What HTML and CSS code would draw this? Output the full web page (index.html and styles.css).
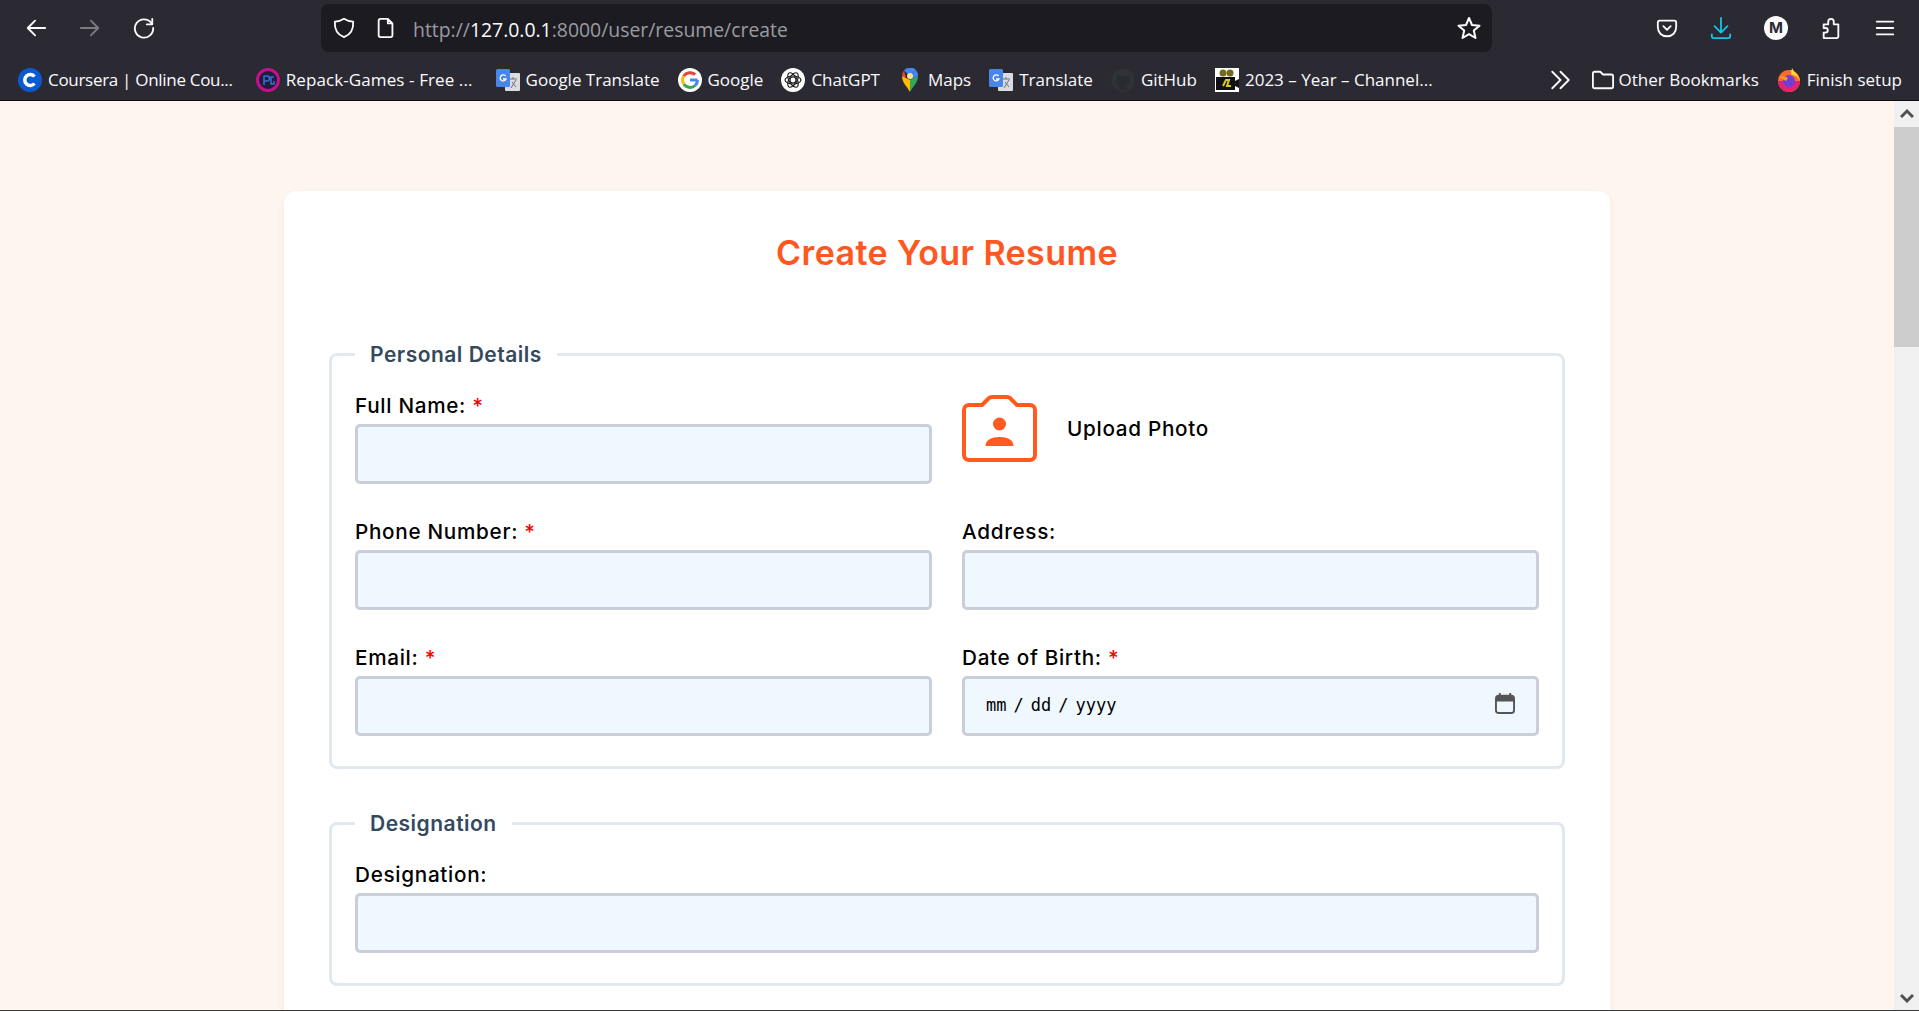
FILE: index.html

```html
<!DOCTYPE html>
<html>
<head>
<meta charset="utf-8"/>
<title>Create Your Resume</title>
<link rel="stylesheet" href="styles.css">
</head>
<body>
<div class="browser">

<div class="toolbar">
  <div class="nav-btns">
    <svg class="ico" viewBox="0 0 24 24"><path d="M22 12H3M11 4l-8 8 8 8"/></svg>
    <svg class="ico ico-off" viewBox="0 0 24 24"><path d="M2 12h19M13 4l8 8-8 8"/></svg>
    <svg class="ico" viewBox="0 0 24 24"><path d="M20 6.500A10 10 0 1 0 22 12M21 2v6h-6"/></svg>
  </div>
  <div class="url-bar">
    <svg class="ico" viewBox="0 0 24 24"><path d="M12 2c3 2 6 3 10 3 .5 8-2 14-10 17C4 19 1.500 13 2 5c4 0 7-1 10-3z"/></svg>
    <svg class="ico ico-page" viewBox="0 0 18 24"><path d="M3 2h8l5 5v13a2 2 0 0 1-2 2H3a2 2 0 0 1-2-2V4a2 2 0 0 1 2-2zM11 2v5h5"/></svg>
    <div class="url-text">http://<span class="url-host">127.0.0.1</span>:8000/user/resume/create</div>
    <svg class="ico ico-star" viewBox="0 0 24 24"><path d="M12 2l3 7 7.500.7-5.700 4.900 1.700 7.400-6.500-3.900L5.500 22l1.700-7.400L1.500 9.700 9 9z"/></svg>
  </div>
  <div class="tool-btns">
    <svg class="ico" viewBox="0 0 24 24"><path d="M4 4h16a2 2 0 0 1 2 2v5c0 6-4 10-10 10S2 17 2 11V6a2 2 0 0 1 2-2zM8 10l4 4 4-4"/></svg>
    <svg class="ico ico-cyan" viewBox="0 0 24 24"><path d="M12 1v16M5 10l7 7 7-7M2 19v2a2 2 0 0 0 2 2h16a2 2 0 0 0 2-2v-2"/></svg>
    <div class="avatar">M</div>
    <svg class="ico" viewBox="0 0 24 24"><path d="M4 8h5V5a3 3 0 0 1 6 0v3h5v13a2 2 0 0 1-2 2H4v-6h2a2.500 2.500 0 0 0 0-5H4z"/></svg>
    <svg class="ico" viewBox="0 0 24 24"><path d="M3 5h18M3 12h18M3 19h18"/></svg>
  </div>
</div>

<div class="bookmarks">
  <div class="bm bm-cut bm-tight">
    <svg class="bm-ico" viewBox="0 0 24 24"><circle cx="12" cy="12" r="12" fill="#0a5bd3"/><path d="M16.500 8.500a5.500 5.500 0 1 0 0 7" fill="none" stroke="#fff" stroke-width="3.500"/></svg>
    <span>Coursera | Online Cou...</span>
  </div>
  <div class="bm bm-cut bm-wide">
    <svg class="bm-ico" viewBox="0 0 24 24"><circle cx="12" cy="12" r="10.500" fill="#1b1d3a" stroke="#c4108c" stroke-width="3"/><path d="M8 17V8h3a2 2 0 0 1 0 5H8M18 9h-3v7h3v-3" fill="none" stroke="#3b6fd0" stroke-width="1.500"/></svg>
    <span>Repack-Games - Free ...</span>
  </div>
  <div class="bm">
    <svg class="bm-ico" viewBox="0 0 24 24"><rect x="9" y="5" width="15" height="18" rx="1" fill="#d9dce1"/><path d="M14 11h7M17 9v2M15 20l5-8M16 14l4 5" stroke="#6c7079" fill="none"/><rect x="0" y="1" width="14" height="18" rx="1.500" fill="#4a86e8"/><path d="M9.500 8a3 3 0 1 0 .5 3H7" fill="none" stroke="#fff" stroke-width="1.300"/></svg>
    <span>Google Translate</span>
  </div>
  <div class="bm">
    <svg class="bm-ico" viewBox="0 0 24 24"><circle cx="12" cy="12" r="12" fill="#fff"/><path d="M19.500 12H12" fill="none" stroke="#4285f4" stroke-width="3"/><path d="M19.500 12a7.500 7.500 0 0 1-2.400 5.500" fill="none" stroke="#4285f4" stroke-width="3"/><path d="M17.100 17.500A7.500 7.500 0 0 1 5.800 16" fill="none" stroke="#34a853" stroke-width="3"/><path d="M5.800 16a7.500 7.500 0 0 1 0-8" fill="none" stroke="#fbbc05" stroke-width="3"/><path d="M5.800 8a7.500 7.500 0 0 1 11.400-1.300" fill="none" stroke="#ea4335" stroke-width="3"/></svg>
    <span>Google</span>
  </div>
  <div class="bm">
    <svg class="bm-ico" viewBox="0 0 24 24"><circle cx="12" cy="12" r="12" fill="#fff"/><g fill="none" stroke="#222" stroke-width="1.200"><circle cx="12" cy="12" r="3"/><ellipse cx="12" cy="12" rx="8" ry="4"/><ellipse cx="12" cy="12" rx="8" ry="4" transform="rotate(60 12 12)"/><ellipse cx="12" cy="12" rx="8" ry="4" transform="rotate(120 12 12)"/></g></svg>
    <span>ChatGPT</span>
  </div>
  <div class="bm">
    <svg class="bm-ico" viewBox="0 0 24 24"><path d="M12 24C9 18 4 15 4 8l8 4z" fill="#fbbc05"/><path d="M12 24c3-6 8-9 8-16l-8 4z" fill="#34a853"/><path d="M6 2.500A8 8 0 0 0 4 8l4 2z" fill="#ea4335"/><path d="M6 2.500A8 8 0 0 1 18 2l-6 6z" fill="#4285f4"/><path d="M18 2a8 8 0 0 1 2 6l-8 4-2-2z" fill="#4285f4"/><circle cx="12" cy="8" r="3" fill="#fbe08a"/></svg>
    <span>Maps</span>
  </div>
  <div class="bm">
    <svg class="bm-ico" viewBox="0 0 24 24"><rect x="9" y="5" width="15" height="18" rx="1" fill="#d9dce1"/><path d="M14 11h7M17 9v2M15 20l5-8M16 14l4 5" stroke="#6c7079" fill="none"/><rect x="0" y="1" width="14" height="18" rx="1.500" fill="#4a86e8"/><path d="M9.500 8a3 3 0 1 0 .5 3H7" fill="none" stroke="#fff" stroke-width="1.300"/></svg>
    <span>Translate</span>
  </div>
  <div class="bm">
    <svg class="bm-ico" viewBox="0 0 24 24"><circle cx="12" cy="12" r="11.500" fill="#2f3338"/><path d="M8 22v-5c-3-1-3-4-2-6 0-2 0-3 1-4 1 0 2 1 3 1.500h4C15 8 16 7 17 7c1 1 1 2 1 4 1 2 1 5-2 6v5z" fill="#2b2a33"/></svg>
    <span>GitHub</span>
  </div>
  <div class="bm">
    <svg class="bm-ico" viewBox="0 0 24 24"><rect width="24" height="24" fill="#fff"/><rect x="1" y="9" width="19" height="13" fill="#111"/><circle cx="8" cy="5" r="3.500" fill="#6f6a1c"/><circle cx="15" cy="5" r="3.500" fill="#6f6a1c"/><path d="M8 18l3-6h3l-2 6h4" fill="none" stroke="#d8c82a" stroke-width="2"/><path d="M20 13l4-2v9l-4-2z" fill="#111"/></svg>
    <span>2023 – Year – Channel...</span>
  </div>
  <div class="bm-right">
    <svg class="ico ico-chev" viewBox="0 0 20 24"><path d="M1 3l9 9-9 9M10 3l9 9-9 9"/></svg>
    <div class="bm bm-folder">
      <svg class="ico" viewBox="0 0 24 20"><path d="M3 1h6l3 3h9a2 2 0 0 1 2 2v11a2 2 0 0 1-2 2H3a2 2 0 0 1-2-2V3a2 2 0 0 1 2-2z"/></svg>
      <span>Other Bookmarks</span>
    </div>
    <div class="bm">
      <svg class="bm-ico" viewBox="0 0 24 24"><circle cx="12" cy="13" r="11" fill="#ff6a2b"/><path d="M1 13a11 11 0 0 0 22 0z" fill="#e3236f"/><path d="M13 2c4 1 9 4 10 11-2-4-5-6-8-6z" fill="#ffc21f"/><path d="M15 0c1 3 4 5 6 9l-7-3z" fill="#ffd93b"/><circle cx="12" cy="13" r="6" fill="#6d3fd8"/><path d="M2 9c3-1 6-1 9 1l-2 3z" fill="#ff9a1f"/></svg>
      <span>Finish setup</span>
    </div>
  </div>
</div>

<div class="viewport">
  <div class="page">
    <div class="card">
      <h1 class="title">Create Your Resume</h1>

      <fieldset class="section">
        <legend>Personal Details</legend>
        <div class="form-grid">
          <div class="field">
            <label>Full Name: <span class="req">*</span></label>
            <input type="text"/>
          </div>
          <div class="upload">
            <svg class="upload-ico" viewBox="0 0 75 67"><path class="cam" d="M7 10H20L27 3Q28 2 30 2H45Q47 2 48 3L55 10H68a5 5 0 0 1 5 5V60a5 5 0 0 1-5 5H7a5 5 0 0 1-5-5V15a5 5 0 0 1 5-5z"/><circle class="person" cx="37.500" cy="29" r="6.500"/><path class="person" d="M23.500 51c0-6 6-9 14-9s14 3 14 9z"/></svg>
            <span class="upload-text">Upload Photo</span>
          </div>
          <div class="field">
            <label>Phone Number: <span class="req">*</span></label>
            <input type="text"/>
          </div>
          <div class="field">
            <label>Address:</label>
            <input type="text"/>
          </div>
          <div class="field">
            <label>Email: <span class="req">*</span></label>
            <input type="text"/>
          </div>
          <div class="field">
            <label>Date of Birth: <span class="req">*</span></label>
            <input class="date" type="date"/>
          </div>
        </div>
      </fieldset>

      <fieldset class="section">
        <legend>Designation</legend>
        <div class="field">
          <label>Designation:</label>
          <input type="text"/>
        </div>
      </fieldset>
    </div>
  </div>
  <div class="scrollbar">
    <svg class="sb-arrow" viewBox="0 0 14 10"><path d="M1 8l6-6 6 6"/></svg>
    <div class="sb-thumb"></div>
    <svg class="sb-arrow sb-down" viewBox="0 0 14 10"><path d="M1 2l6 6 6-6"/></svg>
  </div>
</div>
<div class="edge"></div>

</div>
</body>
</html>
```

FILE: styles.css

```css
html, body { height: 100%; margin: 0; }
body { font-family: Inter, "Liberation Sans", sans-serif; overflow: hidden; }
.browser { height: 1011px; display: flex; flex-direction: column; overflow: hidden; }

/* browser chrome */
.toolbar {
  height: 56px; background: #2b2a33; display: flex; align-items: center;
  padding: 0 23px 0 25px;
}
.ico {
  width: 22px; height: 22px; flex: none; fill: none; stroke: #fbfbfe;
  stroke-width: 2; stroke-linecap: round; stroke-linejoin: round;
}
.ico-off { stroke: #7c7b82; }
.ico-cyan { stroke: #12c4e8; }
.nav-btns { display: flex; gap: 32px; width: 296px; }
.url-bar {
  width: 1171px; height: 48px; background: #1c1b22; border-radius: 8px;
  display: flex; align-items: center; padding: 0 11px 0 12px; box-sizing: border-box;
}
.ico-page { width: 18px; margin-left: 22px; }
.ico-star { margin-left: auto; width: 24px; height: 24px; }
.url-text {
  margin: 2px 0 0 18px; font-family: "Open Sans", sans-serif; font-size: 19.400px; color: #9b9ba0;
  white-space: nowrap;
}
.url-host { color: #fbfbfe; }
.tool-btns { margin-left: auto; display: flex; align-items: center; gap: 32px; }
.avatar {
  width: 24px; height: 24px; border-radius: 50%; background: #fbfbfe; color: #2b2a33;
  font-size: 15px; font-weight: 700; text-align: center; line-height: 24px;
}
.bookmarks {
  height: 44px; background: #2b2a33; border-bottom: 1px solid #0c0c0d;
  display: flex; align-items: center; padding: 0 17px 0 18px;
  font-family: "Open Sans", sans-serif; font-size: 17px; color: #fbfbfe; gap: 18px;
}
.bm { display: flex; align-items: center; gap: 6px; white-space: nowrap; margin-top: 3px; }
.bm-cut { margin-right: 5px; }
.bm-tight { letter-spacing: -0.3px; }
.bm-wide { letter-spacing: 0.1px; }
.bm-ico { width: 24px; height: 24px; flex: none; }
.bm-right { margin-left: auto; display: flex; align-items: center; gap: 18px; }
.ico-chev { width: 19px; margin: 3px 4px 0 0; }
.bm-folder { gap: 5px; }

/* page */
.viewport { flex: 1; min-height: 0; display: flex; }
.page { flex: 1; min-width: 0; overflow: hidden; background: #fff5ef; padding-top: 90px; }
.card {
  width: 1326px; box-sizing: border-box; margin: 0 auto; background: #fff; border-radius: 12px;
  padding: 36px 45px 40px; box-shadow: 0 4px 10px rgba(0, 0, 0, 0.05);
}
.title {
  margin: 0 0 60px; text-align: center; font-size: 34px; line-height: 52px;
  font-weight: 600; color: #ff5722; letter-spacing: 0.4px;
}
.section {
  margin: 0 0 39px; padding: 22px 23px 30px; border: 3px solid #e2e8f0; border-radius: 8px;
  min-width: 0;
}
.section legend {
  padding: 2px 15px 0; font-size: 21px; line-height: 28px;
  font-weight: 600; color: #34495e; letter-spacing: 0.5px;
}
.form-grid { display: grid; grid-template-columns: 1fr 1fr; column-gap: 30px; row-gap: 33px; }
.field label {
  display: block; font-size: 20.700px; line-height: 30px; font-weight: 500; color: #000;
  margin-bottom: 3px; letter-spacing: 0.7px;
}
.req { color: #f00; }
.field input {
  display: block; width: 100%; height: 60px; box-sizing: border-box; padding: 0 20px;
  border: 3px solid #c9ced8; border-radius: 5px; background: #eff7ff;
}
.field .date {
  font-family: "DejaVu Sans Mono", monospace; font-size: 17px; color: #000;
  padding: 0 21px 2px 20px;
}
.date::-webkit-datetime-edit-text { padding: 0 6px; }
.date::-webkit-calendar-picker-indicator {
  width: 20px; height: 22px; padding: 0; margin: 0 0 4px;
  background: url("data:image/svg+xml,%3Csvg xmlns='http://www.w3.org/2000/svg' viewBox='0 0 21 23'%3E%3Cpath d='M1 7a3 3 0 0 1 3-3h13a3 3 0 0 1 3 3v3H1z' fill='%23555'/%3E%3Cpath d='M5 1v3M16 1v3' stroke='%23555' stroke-width='2'/%3E%3Crect x='1' y='4' width='19' height='18' rx='3' fill='none' stroke='%23555' stroke-width='2'/%3E%3C/svg%3E") no-repeat center;
}
.upload { display: flex; align-items: flex-start; gap: 30px; }
.upload-ico { width: 75px; height: 67px; margin-top: 4px; flex: none; }
.cam { fill: none; stroke: #ff5a1f; stroke-width: 4; stroke-linejoin: round; }
.person { fill: #ff5a1f; }
.upload-text {
  font-size: 20.700px; line-height: 30px; font-weight: 500; margin-top: 23px; color: #000;
  letter-spacing: 0.7px;
}

/* scrollbar */
.scrollbar { width: 25px; flex: none; background: #f0f0f0; display: flex; flex-direction: column; align-items: center; }
.sb-arrow {
  width: 14px; height: 26px; flex: none; fill: none; stroke: #505050; stroke-width: 3;
}
.sb-thumb { width: 100%; height: 220px; background: #cdcdcd; }
.sb-down { margin-top: auto; height: 24px; }
.edge { height: 1px; background: #3a3a3a; flex: none; }
```
